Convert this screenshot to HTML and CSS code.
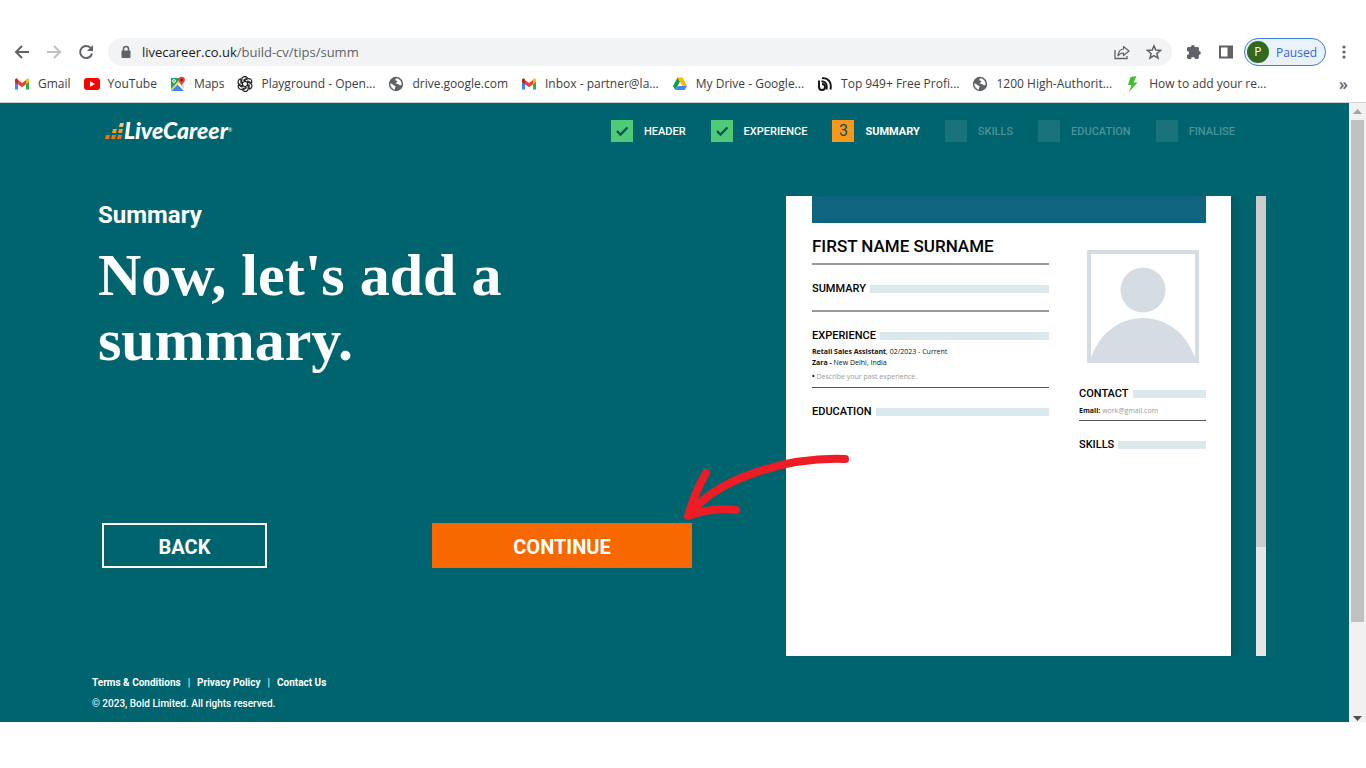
FILE: index.html
```html
<!DOCTYPE html>
<html lang="en">
<head>
    <meta charset="UTF-8">
    <meta name="viewport" content="width=device-width, initial-scale=1.0">
    <title>LiveCareer - Summary</title>
    <link rel="stylesheet" href="styles.css">
</head>
<body>
    <!-- Shared icons -->
    <svg class="sprite" aria-hidden="true">
        <symbol id="gmail" viewBox="0 0 16 16">
            <path d="M1 4v9.500h3V7.500z" fill="#4285f4"/>
            <path d="M12 7.500v6h3V4z" fill="#34a853"/>
            <path d="M12 4.200v4L15 6V4c0-1.600-1.600-2-2.600-1.200z" fill="#fbbc04"/>
            <path d="M4 4.200v4L1 6V4c0-1.600 1.600-2 2.600-1.200z" fill="#c5221f"/>
            <path d="M4 4v4.200l4 3 4-3V4L8 7z" fill="#ea4335"/>
        </symbol>
        <symbol id="globe" viewBox="0 0 16 16">
            <circle cx="8" cy="8" r="7.200" fill="#5f6368"/>
            <path d="M8.500 2.200C6.800 3 7 4.500 8.500 4.700c1.800.3 1 1.700-.3 1.800C7 6.600 7.800 8 9.500 8c2 0 1.700 1.700 3.300 1.300l.8-.9c.2-3-2-5.700-5.100-6.200zM2.300 7.400c1.600.2 2.300.6 3 1.500.7.800 2.200.5 2.300 1.700.1 1-.9 1-.7 2.900C4.300 13 2.200 10.500 2.300 7.400z" fill="#fff"/>
        </symbol>
        <symbol id="tick" viewBox="0 0 22 22">
            <path d="M6 11l3.500 3.500L16.500 7.500" fill="none" stroke="#00505c" stroke-width="2.400"/>
        </symbol>
    </svg>

    <!-- Browser bar -->
    <div class="toolbar">
        <button class="icon-btn" aria-label="Back">
            <svg width="16" height="16" viewBox="0 0 16 16"><path d="M15 8H2M8 2L2 8l6 6" fill="none" stroke="#5f6368" stroke-width="2"/></svg>
        </button>
        <button class="icon-btn" aria-label="Forward">
            <svg width="16" height="16" viewBox="0 0 16 16"><path d="M1 8h13M8 2l6 6-6 6" fill="none" stroke="#bdc0c3" stroke-width="2"/></svg>
        </button>
        <button class="icon-btn" aria-label="Reload">
            <svg width="16" height="16" viewBox="0 0 16 16"><path d="M13 4.500A6 6 0 1 0 14 9.500" fill="none" stroke="#5f6368" stroke-width="2"/><path d="M15 1v6H9z" fill="#5f6368"/></svg>
        </button>
        <div class="address">
            <svg class="lock" width="12" height="14" viewBox="0 0 12 14"><path d="M3.500 6V4a2.500 2.500 0 0 1 5 0v2" fill="none" stroke="#5f6368" stroke-width="1.500"/><rect x="1.500" y="5.500" width="9" height="7.500" rx="1" fill="#5f6368"/></svg>
            <label for="url">livecareer.co.uk</label>
            <input type="text" id="url" value="/build-cv/tips/summ">
            <button class="icon-btn" aria-label="Share">
                <svg width="16" height="16" viewBox="0 0 16 16"><path d="M1 6v8.500h12V12" fill="none" stroke="#5f6368" stroke-width="1.300"/><path d="M9.500 2.500L15 7l-5.500 4.500V9C7 9 5.200 10 4 11.800 4.300 8 6.500 5.300 9.500 5z" fill="none" stroke="#5f6368" stroke-width="1.200" stroke-linejoin="round"/></svg>
            </button>
            <button class="icon-btn" aria-label="Bookmark">
                <svg width="16" height="16" viewBox="0 0 16 16"><path d="M8 1.800l1.800 4.300 4.700.4-3.600 3 1.100 4.600L8 11.700l-4 2.400 1.100-4.600-3.600-3 4.700-.4z" fill="none" stroke="#5f6368" stroke-width="1.500"/></svg>
            </button>
        </div>
        <button class="icon-btn" aria-label="Extensions">
            <svg width="16" height="16" viewBox="0 0 16 16"><path d="M1 4.500C1 3.700 1.500 3 2.500 3H5a1.900 1.900 0 1 1 3.800 0h2.700c.8 0 1.400.6 1.400 1.400V7a1.900 1.900 0 1 1 0 3.800v2.800c0 .8-.6 1.400-1.400 1.400H9a2 2 0 1 0-4 0H2.500c-.9 0-1.500-.6-1.500-1.400V11a2 2 0 1 0 0-4z" fill="#5f6368"/></svg>
        </button>
        <button class="icon-btn" aria-label="Side panel">
            <svg width="16" height="16" viewBox="0 0 16 16"><path d="M1 1.500h14v13H1zM3 3.500v9h6.500v-9z" fill="#5f6368" fill-rule="evenodd"/></svg>
        </button>
        <button class="profile"><span class="avatar">P</span>Paused</button>
        <button class="icon-btn menu" aria-label="Menu">
            <svg width="4" height="16" viewBox="0 0 4 16"><circle cx="2" cy="3" r="1.600"/><circle cx="2" cy="8" r="1.600"/><circle cx="2" cy="13" r="1.600"/></svg>
        </button>
    </div>

    <nav class="bookmarks">
        <a href="#"><svg><use href="#gmail"/></svg>Gmail</a>
        <a href="#"><svg viewBox="0 0 16 16"><rect y="2" width="16" height="12" rx="3" fill="#f00"/><path d="M6 5.300v5.400L11 8z" fill="#fff"/></svg>YouTube</a>
        <a href="#"><svg viewBox="0 0 16 16"><path d="M1 2h10L1 14z" fill="#1fa463"/><path d="M1 15l6.500-6.500L14 15z" fill="#4285f4"/><path d="M8.500 7.500L14 13V5z" fill="#dadce0"/><path d="M1 15V13L11 2l1 2z" fill="#fbd04b"/><path d="M11.500 10C11.300 7.500 8.500 6.500 8.500 4a3.200 3.200 0 0 1 6.400 0c0 2.500-3 3.500-3.400 6z" fill="#ea4335"/><circle cx="11.700" cy="4" r="1.200" fill="#811411"/><circle cx="4" cy="5" r="1.400" fill="none" stroke="#fff"/></svg>Maps</a>
        <a href="#"><svg viewBox="0 0 16 16"><g fill="none" stroke="#222" stroke-width="1.200"><path id="petal" d="M8 5.200L4.800 7V3.600a3 3 0 0 1 5.500-1.700L6.400 4.200"/><use href="#petal" transform="rotate(60 8 8)"/><use href="#petal" transform="rotate(120 8 8)"/><use href="#petal" transform="rotate(180 8 8)"/><use href="#petal" transform="rotate(240 8 8)"/><use href="#petal" transform="rotate(300 8 8)"/></g></svg>Playground - Open...</a>
        <a href="#"><svg><use href="#globe"/></svg>drive.google.com</a>
        <a href="#"><svg><use href="#gmail"/></svg>Inbox - partner@la...</a>
        <a href="#"><svg viewBox="0 0 16 16"><path d="M5.500 1.500L1 10l2.300 4L8 5.500z" fill="#0f9d58"/><path d="M5.500 1.500h5L15 10h-4.700z" fill="#ffba00"/><path d="M5.500 10H15l-2.300 4H3.300z" fill="#4285f4"/></svg>My Drive - Google...</a>
        <a href="#"><svg viewBox="0 0 16 16"><g fill="none" stroke="#111" stroke-width="1.900"><path d="M2 4.500v6.500a3 3 0 1 0 3-3"/><path d="M4.500 5.200c4 0 6 3 5 8.300M5 2.200c6-.5 10 4 8.500 11.300"/></g></svg>Top 949+ Free Profi...</a>
        <a href="#"><svg><use href="#globe"/></svg>1200 High-Authorit...</a>
        <a href="#"><svg viewBox="0 0 16 16"><path d="M5.500 1L3 9h3.500L4 16l8.500-9.500H8.500L11.500 0z" fill="#3fbf2f"/></svg>How to add your re...</a>
        <button class="more" aria-label="More bookmarks">»</button>
    </nav>

    <!-- Page -->
    <div class="viewport">
        <div class="page">
            <header class="header">
                <a class="logo" href="#">
                    <svg width="19" height="17" viewBox="0 0 19 17">
                        <g fill="#f5730a"><path d="M1 13h4l-1 4H0zM7 13h4l-1 4H6zM13 13h4l-1 4h-4z"/></g>
                        <g fill="#f99b1c"><path d="M8 7h4l-1 4H7zM14 7h4l-1 4h-4z"/></g>
                        <path d="M15 1h4l-1 4h-4z" fill="#fbc078"/>
                    </svg>
                    LiveCareer<sup>®</sup>
                </a>
                <ol class="steps">
                    <li class="done"><span class="box"><svg><use href="#tick"/></svg></span>HEADER</li>
                    <li class="done"><span class="box"><svg><use href="#tick"/></svg></span>EXPERIENCE</li>
                    <li class="current"><span class="box">3</span>SUMMARY</li>
                    <li><span class="box"></span>SKILLS</li>
                    <li><span class="box"></span>EDUCATION</li>
                    <li><span class="box"></span>FINALISE</li>
                </ol>
            </header>

            <main class="main">
                <section class="intro">
                    <h2>Summary</h2>
                    <h1>Now, let's add a<br>summary.</h1>
                    <div class="actions">
                        <button class="btn back">BACK</button>
                        <button class="btn continue">CONTINUE</button>
                        <svg class="arrow" width="170" height="68" viewBox="0 0 170 68">
                            <path d="M163 6C105 4 35 25 7 62M24 20C17 32 11 46 6 63C22 57 38 55 54 57" fill="none" stroke="#ee1c25" stroke-width="8" stroke-linecap="round" stroke-linejoin="round"/>
                        </svg>
                    </div>
                </section>

                <section class="preview">
                    <div class="paper">
                        <div class="banner"></div>
                        <div class="columns">
                            <div>
                                <h3 class="name">FIRST NAME SURNAME</h3>
                                <div class="block empty"><h4>SUMMARY</h4></div>
                                <div class="block">
                                    <h4>EXPERIENCE</h4>
                                    <p><b>Retail Sales Assistant</b>, 02/2023 - Current<br><b>Zara - </b>New Delhi, India</p>
                                    <p class="hint"><b>•</b> Describe your past experience.</p>
                                </div>
                                <div class="block last"><h4>EDUCATION</h4></div>
                            </div>
                            <div>
                                <svg class="photo" viewBox="0 0 112 113">
                                    <rect x="2" y="2" width="108" height="109" fill="#fff" stroke="#d6dce3" stroke-width="4"/>
                                    <circle cx="56" cy="40" r="22.500" fill="#d6dce3"/>
                                    <path d="M3 111C11 84 32 68 56 68s45 16 53 43z" fill="#d6dce3"/>
                                </svg>
                                <div class="block contact">
                                    <h4>CONTACT</h4>
                                    <p><b>Email:</b> <span>work@gmail.com</span></p>
                                </div>
                                <div class="block last"><h4>SKILLS</h4></div>
                            </div>
                        </div>
                    </div>
                    <div class="preview-scroll"><div></div></div>
                </section>
            </main>

            <footer class="footer">
                <nav>
                    <a href="#">Terms &amp; Conditions</a>
                    <a href="#">Privacy Policy</a>
                    <a href="#">Contact Us</a>
                </nav>
                <p>© 2023, Bold Limited. All rights reserved.</p>
            </footer>
        </div>
        <div class="scrollbar">
            <svg width="9" height="5" viewBox="0 0 9 5"><path d="M0 5l4.500-5L9 5z" fill="#a3a3a3"/></svg>
            <div class="track"><div class="thumb"></div></div>
            <svg width="9" height="5" viewBox="0 0 9 5"><path d="M0 0h9L4.500 5z" fill="#505050"/></svg>
        </div>
    </div>
</body>
</html>
```
FILE: styles.css
```css
* {
    box-sizing: border-box;
}
body {
    margin: 0;
    padding-top: 36px;
    background-color: #fff;
    font-family: Roboto, Arial, sans-serif;
}
h1, h2, h3, h4, p, ol {
    margin: 0;
    padding: 0;
}
a {
    color: inherit;
    text-decoration: none;
}
button {
    padding: 0;
    border: none;
    background: none;
    font-family: inherit;
    cursor: pointer;
}
.sprite {
    display: none;
}

/* browser bar */
.toolbar {
    display: flex;
    align-items: center;
    gap: 16px;
    height: 32px;
    padding: 0 20px 0 14px;
    font-family: "Open Sans", "Noto Sans", sans-serif;
}
.icon-btn {
    display: flex;
    fill: #5f6368;
}
.address {
    flex: 1;
    display: flex;
    align-items: center;
    height: 28px;
    padding: 0 10px 0 12px;
    margin: 0 -2px;
    border-radius: 14px;
    background-color: #f1f3f4;
    font-size: 13px;
    color: #202124;
}
.address label {
    margin-left: 10px;
}
.address input {
    flex: 1;
    min-width: 0;
    padding: 0;
    border: none;
    outline: none;
    background: none;
    font: inherit;
    color: #5f6368;
}
.address .icon-btn {
    margin-left: 16px;
}
.profile {
    display: flex;
    align-items: center;
    gap: 7px;
    height: 28px;
    padding: 0 8px 0 2px;
    margin-left: -6px;
    border: 1px solid #3b7de0;
    border-radius: 14px;
    background-color: #e9f1fb;
    color: #3367d6;
    font-size: 12px;
}
.avatar {
    width: 22px;
    height: 22px;
    border-radius: 50%;
    background-color: #33691e;
    color: #fff;
    line-height: 22px;
    text-align: center;
}
.bookmarks {
    display: flex;
    align-items: center;
    gap: 13px;
    height: 35px;
    padding: 0 18px 3px 14px;
    border-bottom: 1px solid #d0d3d6;
    font-family: "Open Sans", "Noto Sans", sans-serif;
    font-size: 12px;
    color: #3c4043;
    white-space: nowrap;
}
.bookmarks a {
    display: flex;
    align-items: center;
    gap: 8px;
}
.bookmarks svg {
    width: 16px;
    height: 16px;
}
.more {
    margin-left: auto;
    color: #5f6368;
    font-size: 16px;
    font-weight: 600;
}

/* page */
.viewport {
    display: flex;
}
.page {
    flex: 1;
    background-color: #00646e;
    color: #fff;
}
.header {
    display: flex;
    align-items: flex-start;
    justify-content: space-between;
    padding: 17px 114px 0 105px;
}
.logo {
    display: flex;
    align-items: center;
    font-family: Lato, sans-serif;
    font-size: 23px;
    font-weight: 900;
    font-style: italic;
    line-height: 20px;
}
.logo sup {
    align-self: flex-start;
    font-size: 5px;
    font-weight: 400;
}
.steps {
    display: flex;
    gap: 25px;
    list-style: none;
    font-size: 11px;
    font-weight: 500;
}
.steps li {
    display: flex;
    align-items: center;
    gap: 11px;
    color: #4b9299;
}
.box {
    width: 22px;
    height: 22px;
    background-color: #1a727b;
}
.box svg {
    display: block;
    width: 22px;
    height: 22px;
}
.steps .done {
    color: #fff;
}
.done .box {
    background-color: #4fcb78;
}
.steps .current {
    color: #fff;
    font-weight: 700;
}
.current .box {
    background-color: #f8981d;
    color: #00505c;
    font-size: 16px;
    font-weight: 400;
    line-height: 22px;
    text-align: center;
}
.main {
    display: grid;
    grid-template-columns: 1fr 480px;
    gap: 94px;
    padding: 54px 83px 0 98px;
}
.intro h2 {
    padding-top: 5px;
    font-size: 24px;
    line-height: 28px;
}
.intro h1 {
    padding-top: 14px;
    font-family: "Liberation Serif", serif;
    font-size: 60px;
    line-height: 65px;
}
.actions {
    position: relative;
    display: flex;
    justify-content: space-between;
    margin: 150px 0 0 4px;
}
.btn {
    height: 45px;
    padding-top: 2px;
    font-size: 20px;
    font-weight: 700;
    color: #fff;
}
.back {
    width: 165px;
    border: 2px solid #fff;
}
.continue {
    width: 260px;
    background-color: #f76800;
}
.arrow {
    position: absolute;
    right: -160px;
    bottom: 47px;
}

/* cv preview */
.preview {
    display: flex;
    justify-content: space-between;
    height: 460px;
    overflow: hidden;
}
.paper {
    width: 445px;
    padding: 0 25px 0 26px;
    background-color: #fff;
    box-shadow: 2px 0 12px rgba(0, 0, 0, 0.2);
    color: #111;
    font-size: 7px;
    line-height: 11px;
}
.banner {
    height: 27px;
    background-color: #10657e;
}
.columns {
    display: grid;
    grid-template-columns: 237px 1fr;
    gap: 30px;
}
.name {
    padding: 10px 0 4px;
    border-bottom: 2px solid #999;
    color: #000;
    font-size: 17px;
    font-weight: 500;
    line-height: 26px;
}
.block {
    padding: 17px 0 5px;
    border-bottom: 1px solid #555;
}
.block h4 {
    display: flex;
    align-items: center;
    gap: 4px;
    padding-bottom: 3px;
    color: #000;
    font-size: 11px;
    font-weight: 500;
    line-height: 14px;
}
.block h4::after {
    content: "";
    flex: 1;
    height: 8px;
    background-color: #dce9ec;
}
.empty {
    padding-bottom: 11px;
    border-bottom: 2px solid #999;
}
.last {
    border-bottom: none;
}
.block p {
    font-family: "Open Sans", sans-serif;
    font-weight: 500;
}
.block .hint {
    padding-top: 3px;
}
.hint, .contact span {
    color: #999;
    font-weight: 400;
}
.hint b {
    color: #111;
}
.photo {
    display: block;
    width: 112px;
    margin: 27px auto 0;
}
.contact {
    padding: 24px 0 4px;
}
.contact h4 {
    padding-bottom: 4px;
}
.preview-scroll {
    width: 10px;
    background-color: #e6e6e6;
}
.preview-scroll div {
    height: 351px;
    background-color: #ccc;
}

.footer {
    padding: 21px 92px 12px;
    font-size: 10px;
    font-weight: 500;
    line-height: 12px;
}
.footer nav {
    display: flex;
    margin-bottom: 9px;
    font-weight: 700;
}
.footer a + a::before {
    content: "|";
    padding: 0 7px;
    font-weight: 400;
}

.scrollbar {
    display: flex;
    flex-direction: column;
    align-items: center;
    width: 17px;
    padding: 6px 2px 1px;
    background-color: #f1f1f1;
}
.track {
    flex: 1;
    width: 13px;
    margin: 6px 0 12px;
}
.thumb {
    height: 86%;
    background-color: #c1c1c1;
}
```
